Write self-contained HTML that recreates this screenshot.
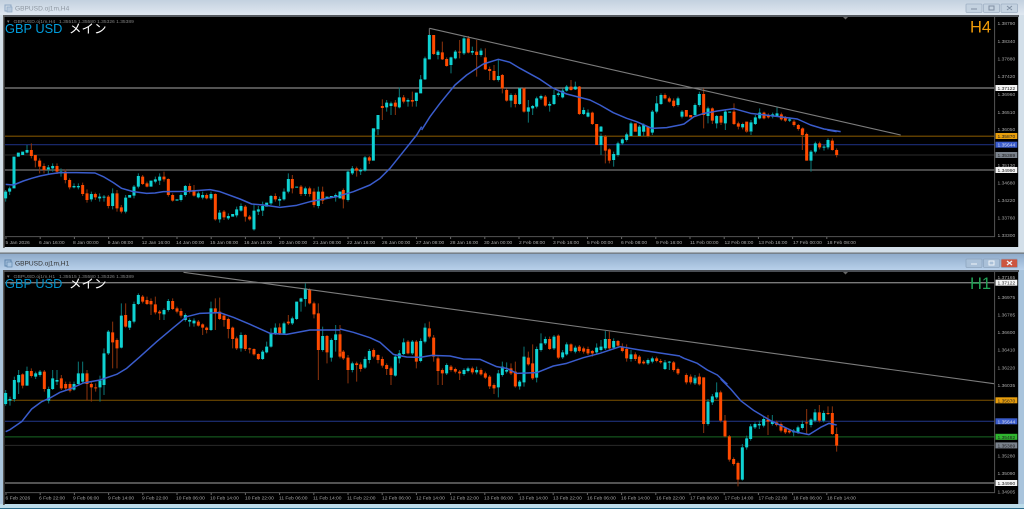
<!DOCTYPE html>
<html><head><meta charset="utf-8"><style>
html,body{margin:0;padding:0;background:#000;width:1024px;height:509px;overflow:hidden}
svg{display:block;filter:blur(.32px)}
text{font-family:"Liberation Sans","Noto Sans CJK JP",sans-serif}
.u,.d,.uw,.dw{fill:none}
.u{stroke:#0fd2d2;stroke-width:9}
.d{stroke:#ff4a00;stroke-width:9}
.uw{stroke:#0b7878;stroke-width:3}
.dw{stroke:#8e340c;stroke-width:3}
.ma{fill:none;stroke:#3a5ccc;stroke-width:4.5;stroke-linejoin:round}
.t{font-size:4.9px;fill:#a8a8a8}
.p{font-size:4.9px;fill:#a8a8a8}
.b{font-size:4.9px;fill:#222}
</style></head><body>
<svg width="1024" height="509" viewBox="0 0 1024 509" xmlns="http://www.w3.org/2000/svg">
<defs>
<linearGradient id="g1" x1="0" y1="0" x2="0" y2="1"><stop offset="0" stop-color="#c3d1df"/><stop offset="1" stop-color="#e0e8f1"/></linearGradient>
<linearGradient id="g2" x1="0" y1="0" x2="0" y2="1"><stop offset="0" stop-color="#8fabca"/><stop offset="1" stop-color="#b8d0ea"/></linearGradient>
</defs>
<rect width="1024" height="253" fill="#d3dfe9"/>
<rect width="1024" height="15" fill="url(#g1)"/>
<rect y="253" width="1024" height="256" fill="#a9c4dc"/>
<rect y="254" width="1024" height="16" fill="url(#g2)"/>
<rect y="252.6" width="1024" height="1" fill="#555"/>
<rect y="504" width="1024" height="4" fill="#bcdcea"/>
<rect y="508" width="1024" height="1" fill="#2a6a8a"/>
<rect x="3" y="15" width="1016" height="2" fill="#555a60"/>
<rect x="3" y="270" width="1016" height="2" fill="#4a4e54"/>
<rect x="3" y="15" width="1.8" height="233" fill="#666"/>
<rect x="3" y="270" width="1.8" height="235" fill="#555"/>
<rect x="4.5" y="17" width="1013.7" height="230" fill="#000"/>
<rect x="4.5" y="272" width="1013.7" height="232" fill="#000"/>

<!-- title bars -->
<rect x="5" y="5" width="6" height="6" fill="none" stroke="#8fa8c4" stroke-width="1"/><rect x="7" y="7" width="5" height="5" fill="#b6c8dc" stroke="#8fa8c4" stroke-width=".7"/>
<text x="15" y="10.6" font-size="6.6" fill="#8f98a2">GBPUSD.oj1m,H4</text>
<rect x="5" y="260" width="6" height="6" fill="none" stroke="#5f86ad" stroke-width="1"/><rect x="7" y="262" width="5" height="5" fill="#a8c4e0" stroke="#5f86ad" stroke-width=".7"/>
<text x="15" y="265.6" font-size="6.6" fill="#333">GBPUSD.oj1m,H1</text>
<g fill="#c4d2e0" stroke="#9fb0c4" stroke-width=".8">
<rect x="966" y="4" width="16" height="8.5" rx="1"/><rect x="983.5" y="4" width="16" height="8.5" rx="1"/><rect x="1001" y="4" width="16.5" height="8.5" rx="1"/>
</g>
<g fill="none" stroke="#7f8fa2" stroke-width="1"><path d="M971 9h6M989 6h5v4h-5zM1007 6l5 4M1012 6l-5 4"/></g>
<g stroke="#8ea5bf" stroke-width=".8"><rect x="966" y="259" width="16" height="8.5" rx="1" fill="#a9c0d8"/><rect x="983.5" y="259" width="16" height="8.5" rx="1" fill="#a9c0d8"/><rect x="1001" y="259" width="16.5" height="8.5" rx="1" fill="#cc5540"/></g>
<g fill="none" stroke="#eef3f8" stroke-width="1"><path d="M971 264h6M989 261h5v4h-5z"/><path d="M1007 261l5 4M1012 261l-5 4" stroke-width="1.3"/></g>

<!-- H4 lines -->
<g stroke-width="1.2">
<path d="M5 88H995" stroke="#858585"/>
<path d="M5 136.2H995" stroke="#7e5200"/>
<path d="M5 144.7H995" stroke="#1b2d78"/>
<path d="M5 155H995" stroke="#242424"/>
<path d="M5 170H995" stroke="#747474"/>
</g>
<!-- H1 lines -->
<path d="M5 282.7H995" stroke="#7a7a7a" stroke-width="1.3"/>
<path d="M5 400.3H995" stroke="#7e5200" stroke-width="1"/>
<path d="M5 421.3H995" stroke="#22388c" stroke-width="1"/>
<path d="M5 436.8H995" stroke="#0f4016" stroke-width="1.6"/>
<path d="M5 445.4H995" stroke="#2a2a2a" stroke-width="1"/>
<path d="M5 483H995" stroke="#6e6e6e" stroke-width="1.6"/>

<!-- axes -->
<path d="M5 236.6H994.6V17" fill="none" stroke="#555" stroke-width="1"/>
<path d="M5 492.6H994.6V272" fill="none" stroke="#555" stroke-width="1"/>
<path d="M5.5 238H830" stroke="#666" stroke-width="2" stroke-dasharray="1 33.2"/>
<path d="M5.5 494H830" stroke="#666" stroke-width="2" stroke-dasharray="1 33.2"/>
<path d="M843 17h5l-2.5 2.5z" fill="#666"/>
<path d="M843 272h5l-2.5 2.5z" fill="#666"/>

<!-- H4 candles -->
<g transform="translate(0,130) scale(.33333)">
<path class="uw" d="M17 180V215M29 170V195M81 45V70M145 105V135M158 100V125M183 115V140M222 160V175M235 160V178M274 185V215M299 190V215M312 195V215M338 175V238M377 195V250M402 165V205M415 130V175M466 140V160M479 130V165M543 190V215M556 165V200M595 185V205M608 185V208M633 185V210M659 240V278M685 250V270M710 230V262M723 220V245M762 225V302M775 228V255M788 215V258M813 195V225M839 200V228M852 175V212M865 130V190M916 170V198M955 170V235M1007 190V215"/>
<path class="dw" d="M94 40V85M106 75V112M119 85V130M132 100V130M171 100V132M196 118V160M209 145V178M248 158V198M261 178V218M286 188V210M325 195V235M351 180V245M364 225V250M428 135V165M441 155V172M492 125V155M505 145V200M518 190V215M569 160V190M582 165V200M620 190V208M646 190V272M672 240V270M736 225V275M749 255V272M826 190V215M877 135V190M903 165V198M929 170V200M942 175V232M968 170V222"/>
<path class="u" d="M17 185V205M29 175V185M42 80V175M55 68V80M68 65V75M81 60V68M145 112V118M158 108V115M183 125V130M222 168V172M235 168V172M274 192V208M299 200V205M312 200V203M338 190V228M377 203V245M389 195V203M402 170V197M415 138V170M453 152V170M466 148V155M479 140V152M531 208V212M543 195V210M556 168V195M595 190V202M608 195V203M633 192V205M659 248V268M685 258V265M698 252V260M710 238V256M723 228V242M762 242V298M775 238V245M788 228V242M800 218V230M813 198V220M839 207V212M852 185V208M865 147V185M890 170V173M916 175V192M955 185V228M981 200V205M994 198V203M1007 195V200M1020 185V200"/>
<path class="d" d="M94 60V78M106 75V92M119 92V110M132 108V120M171 108V125M196 125V150M209 150V172M248 165V192M261 190V210M286 192V202M325 200V228M351 190V235M364 232V245M428 140V162M441 160V170M492 140V148M505 147V195M518 195V212M569 168V182M582 180V197M620 195V205M646 192V268M672 245V262M736 230V260M749 260V268M826 198V208M877 147V175M903 170V192M929 175V192M942 185V225M968 185V212"/>
<polyline class="ma" points="17,163 40,165 70,153 95,145 120,138 150,132 180,128 230,128 285,129 310,140 340,158 365,175 400,185 440,190 465,189 490,185 560,184 630,179 660,185 720,207 755,222 790,225 840,232 890,226 930,215 1020,198"/>
</g>
<g transform="translate(340,130) scale(.33333)">
<path class="uw" d="M24 120V215M37 108V135M62 115V135M75 78V125M114 0V15M783 10V75M821 65V110M834 35V80M847 25V45M860 8V35M911 0V18M937 0V15"/>
<path class="dw" d="M10 175V235M50 110V140M88 78V102M796 15V100M808 55V100M924 0V22"/>
<path class="u" d="M0 185V205M24 125V210M37 115V130M62 120V124M75 82V122M100 -5V92M783 18V45M821 72V90M834 40V75M847 28V40M860 13V30M873 0V18M898 0V18M911 0V5M937 0V8"/>
<path class="d" d="M10 180V208M50 115V122M88 82V92M770 -5V45M796 20V62M808 58V92M886 0V5M924 0V18"/>
<polyline class="ma" points="0,197 40,185 90,165 120,145 150,115 190,65 230,15 245,-10"/>
</g>
<g transform="translate(340,0) scale(.33333)">
<path d="M268 85V105" stroke="#777" stroke-width="3"/>
<path class="uw" d="M140 300V335M153 305V345M178 262V325M204 295V320M229 278V320M242 225V240M255 170V240M294 150V178M333 170V220M346 150V178M372 110V165M397 140V165M423 145V170M475 180V245M513 280V322M539 262V315M565 300V368M578 315V345M590 290V325M603 284V300M629 305V335M642 270V315M655 275V290M668 265V295M680 255V275M706 245V270M731 322V345M744 328V352M873 365V390M898 375V390M911 370V390M937 330V390M950 288V340M963 280V315M1014 290V320M783 378V390"/>
<path class="dw" d="M127 298V360M166 300V345M191 285V310M217 275V320M281 105V165M307 125V180M320 172V200M359 120V175M385 108V160M410 120V230M436 145V210M449 200V240M462 195V243M487 222V280M500 265V305M526 280V322M552 262V338M616 285V320M693 240V272M718 258V345M757 335V375M975 280V298M988 290V308M1001 295V322"/>
<path class="u" d="M101 385V395M114 345V388M140 308V322M153 310V318M178 292V322M204 300V305M229 278V303M242 238V280M255 175V238M268 105V178M294 155V165M333 172V195M346 155V175M372 115V160M397 153V158M423 152V165M475 228V240M513 285V302M539 265V312M565 322V335M578 318V325M590 295V320M603 288V295M629 312V317M642 285V312M655 280V285M668 272V292M680 260V272M706 260V268M731 330V342M744 338V350M873 370V395M898 380V395M911 375V395M937 335V395M950 310V335M963 285V312M1014 295V315M783 380V395"/>
<path class="d" d="M127 318V324M166 308V320M191 292V305M217 300V305M281 105V162M307 157V178M320 177V198M359 155V158M385 115V158M410 155V165M436 172V208M449 207V213M462 213V240M487 225V265M500 270V302M526 285V312M552 265V335M616 290V317M693 260V270M718 260V342M757 338V372M770 372V395M886 370V395M924 380V395M975 285V295M988 295V305M1001 302V318"/>
<polyline class="ma" points="245,390 270,350 300,310 345,255 380,225 430,192 475,178 510,187 540,205 600,238 640,265 680,282 750,300 780,315 820,338 860,355 890,365 935,385 980,383 1020,375"/>
</g>
<g transform="translate(684,0) scale(.33333)">
<path class="uw" d="M-6 330V355M33 310V350M46 275V320M72 320V370M98 345V385M124 330V390M201 360V395M214 345V375M227 325V358M266 338V355M279 322V350M317 352V366"/>
<path class="dw" d="M59 265V385M85 322V372M111 345V375M150 310V375M163 365V388M176 368V388M240 335V358M253 340V356M292 338V362M304 348V366M330 360V380M343 372V392M356 382V398"/>
<path class="u" d="M-6 335V350M33 315V345M46 282V315M72 325V348M98 348V370M124 335V370M137 335V338M176 372V382M201 367V395M214 352V372M227 338V355M266 343V350M279 340V348M317 358V362"/>
<path class="d" d="M7 330V350M20 345V352M59 282V345M85 325V362M111 348V368M150 335V372M163 370V380M188 365V395M240 338V355M253 345V352M292 343V358M304 352V362M330 365V375M343 375V387M356 385V395"/>
<polyline class="ma" points="-12,375 0,372 30,350 60,340 100,333 150,326 200,340 260,347 340,357 380,375 420,387 470,395"/>
</g>
<g transform="translate(684,130) scale(.33333)">
<path class="uw" d="M201 0V15M381 60V125M394 35V70M420 45V62M432 25V58"/>
<path class="dw" d="M188 0V8M355 0V60M368 8V92M407 35V58M445 25V62M458 55V82"/>
<path class="u" d="M201 -3V3M381 65V92M394 40V65M420 50V53M432 30V52"/>
<path class="d" d="M355 -3V15M368 12V92M407 40V52M445 32V60M458 60V75"/>
<polyline class="ma" points="430,0 458,5"/>
</g>

<!-- H1 candles -->
<g transform="translate(0,255) scale(.33333)">
<path class="uw" d="M17 405V452M30 425V452M43 365V440M56 345V417M81 335V392M107 350V372M120 345V365M146 395V445M158 345V405M171 345V390M222 380V407M235 320V392M248 320V385M300 362V440M312 280V420M325 225V300M364 145V280M389 195V225M402 140V205M415 115V150M492 160V195M505 132V170M556 175V200M569 190V215M582 190V215M633 140V228M723 232V290M788 285V315M800 260V295M813 220V278M826 205V240M852 200V240M877 185V210M890 140V195M903 128V170M916 85V155M968 215V290M994 250V320M1007 210V290"/>
<path class="dw" d="M68 355V400M94 340V368M133 345V410M184 360V405M197 380V405M210 380V412M261 345V437M274 380V440M287 385V410M338 200V340M351 250V340M377 145V218M428 120V145M441 125V150M453 130V180M466 125V178M479 165V195M518 130V165M531 155V175M543 160V188M595 195V215M608 205V240M620 215V235M646 130V225M659 128V195M672 175V215M685 188V250M698 215V280M710 245V285M736 238V288M749 278V295M762 280V302M775 295V315M839 205V240M865 180V210M929 100V148M942 140V190M955 145V375M981 240V325M1020 210V310"/>
<path class="u" d="M17 414V447M30 432V437M43 375V432M56 360V382M81 348V392M107 355V365M120 350V360M146 402V437M158 370V402M171 375V380M222 387V404M235 355V387M248 355V380M300 377V397M312 295V390M325 230V295M364 182V278M389 198V218M402 147V200M415 120V147M492 165V178M505 138V165M556 180V195M569 195V200M582 197V205M633 160V225M723 240V280M788 290V312M800 275V292M813 235V275M826 218V235M852 205V235M877 190V205M890 140V192M903 130V140M916 100V132M968 243V285M994 255V308M1007 238V255"/>
<path class="d" d="M68 358V392M94 348V363M133 350V402M184 370V400M197 387V400M210 387V407M261 355V387M274 387V397M287 397V400M338 232V262M351 255V280M377 180V215M428 125V140M441 135V147M453 138V148M466 148V172M479 170V175M518 138V162M531 160V170M543 168V182M595 200V212M608 208V218M620 218V225M646 160V172M659 170V192M672 182V195M685 192V222M698 218V252M710 250V280M736 240V282M749 280V283M762 282V298M775 297V312M839 217V235M865 200V205M929 105V145M942 145V178M955 175V285M981 243V292M1020 238V305"/>
<polyline class="ma" points="17,530 30,524 65,500 95,462 125,440 150,429 180,412 210,402 250,384 300,375 350,358 380,340 420,305 470,260 520,218 560,185 600,175 660,173 700,187 750,208 810,235 860,238 930,225 1020,225"/>
</g>
<g transform="translate(340,255) scale(.33333)">
<path class="uw" d="M37 320V352M75 305V342M88 282V325M166 300V365M178 285V325M191 250V300M217 255V300M242 250V322M255 205V265M320 325V360M372 340V362M384 335V352M410 335V358M475 345V427M487 320V365M500 322V355M539 375V404M552 275V395M590 275V382M603 235V290M616 245V270M642 240V285M668 285V312M680 262V302M706 272V295M770 265V298M783 255V290M796 228V285M821 250V282M873 285V320M924 310V330M937 305V325M975 315V345M988 318V345"/>
<path class="dw" d="M0 232V295M10 285V315M24 300V385M50 320V380M62 322V350M101 280V310M114 298V325M127 305V338M140 325V360M153 335V390M204 255V298M229 255V340M268 200V250M281 240V320M294 305V390M307 340V390M333 330V350M346 338V355M359 345V375M397 335V358M423 340V362M436 350V372M449 360V402M462 385V417M513 325V360M526 320V398M565 290V332M578 268V375M629 245V285M655 238V312M693 265V292M718 270V292M731 275V296M744 275V300M757 285V305M808 230V285M834 255V278M847 265V292M860 268V320M886 292V318M898 300V328M911 315V328M950 305V322M962 312V326M1001 318V350M1014 338V360"/>
<path class="u" d="M37 325V345M75 312V338M88 288V315M166 305V362M178 295V310M191 262V297M217 260V295M242 258V318M255 218V260M320 330V355M372 345V357M384 340V348M410 345V352M475 355V397M487 335V360M500 345V350M539 380V394M552 305V382M590 282V368M603 265V285M616 252V265M642 245V280M668 292V307M680 268V298M706 278V290M770 278V292M783 275V285M796 252V280M821 258V278M873 298V312M924 315V325M937 310V320M975 322V342M988 320V323"/>
<path class="d" d="M0 238V290M10 290V310M24 308V345M50 325V330M62 328V342M101 285V305M114 300V315M127 312V332M140 330V342M153 340V360M204 260V295M229 260V320M268 220V245M281 248V305M294 310V348M307 345V355M333 335V345M346 342V350M359 350V355M397 340V352M423 345V358M436 355V368M449 365V394M462 390V400M513 340V355M526 350V394M565 308V328M578 325V370M629 252V282M655 242V308M693 268V288M718 275V288M731 280V290M744 282V295M757 288V295M808 252V280M834 258V272M847 275V288M860 282V310M886 298V312M898 305V325M911 320V325M950 310V318M962 318V322M1001 322V345M1014 342V355"/>
<polyline class="ma" points="0,222 40,232 90,248 120,262 160,298 200,306 240,307 275,301 330,303 370,312 420,313 470,335 500,340 530,355 590,353 640,333 680,325 730,308 780,295 840,275 900,285 1020,303"/>
</g>
<g transform="translate(684,255) scale(.33333)">
<path class="uw" d="M33 360V390"/>
<path class="dw" d="M7 355V388M20 358V388M46 355V392"/>
<path class="u" d="M33 368V385"/>
<path class="d" d="M7 360V382M20 365V382M46 365V388"/>
<polyline class="ma" points="-12,304 0,310 40,325 70,345 100,360 130,388"/>
</g>
<g transform="translate(684,379) scale(.33333)">
<path class="uw" d="M33 -8V10M72 60V140M85 45V78M98 10V60M175 195V305M188 170V212M200 135V185M213 130V150M226 125V150M239 112V145M265 108V140M329 150V172M342 140V165M355 125V152M381 118V145M393 90V130M419 95V130"/>
<path class="dw" d="M59 -5V162M110 35V130M123 108V175M136 168V248M149 235V260M162 248V322M252 108V168M278 125V142M291 130V160M304 145V165M316 150V164M368 90V165M406 78V130M432 82V108M445 82V168M458 145V218"/>
<path class="u" d="M33 0V8M72 68V135M85 52V70M98 40V55M175 205V302M188 178V205M200 142V180M213 135V145M226 135V139M239 120V140M265 128V135M329 155V160M342 145V160M355 135V147M381 122V138M393 100V125M419 102V125"/>
<path class="d" d="M59 -5V135M46 -5V2M110 40V125M123 125V172M136 172V242M149 240V255M162 252V302M252 122V128M278 130V138M291 135V155M304 148V160M316 155V160M368 130V133M406 100V125M432 102V105M445 102V165M458 165V200"/>
<polyline class="ma" points="110,0 140,30 170,65 210,95 260,125 330,158 375,167 410,145 435,133 458,138"/>
</g>

<!-- trendlines -->
<path d="M429.5 28.3L900.7 135" stroke="#7c7c7c" stroke-width="1.1" fill="none"/>
<path d="M183.5 272.3L994 383.7" stroke="#7c7c7c" stroke-width="1.1" fill="none"/>

<!-- header texts -->
<text x="7" y="22.8" font-size="4.9" fill="#808080">▾</text><text x="13.5" y="22.8" font-size="4.9" fill="#808080" textLength="41.7" lengthAdjust="spacingAndGlyphs">GBPUSD.oj1m,H4</text><text x="59" y="22.8" font-size="4.9" fill="#808080">1.35515 1.35580 1.35326 1.35389</text>
<text x="7" y="277.8" font-size="4.9" fill="#808080">▾</text><text x="13.5" y="277.8" font-size="4.9" fill="#808080" textLength="41.7" lengthAdjust="spacingAndGlyphs">GBPUSD.oj1m,H1</text><text x="59" y="277.8" font-size="4.9" fill="#808080">1.35515 1.35580 1.35326 1.35389</text>
<text x="5" y="33" font-size="12.8" fill="#009ddc">GBP USD</text>
<text x="69" y="33" font-size="12.5" fill="#fff">メイン</text>
<text x="5" y="288" font-size="12.8" fill="#0090c8">GBP USD</text>
<text x="69" y="288" font-size="12.5" fill="#fff">メイン</text>
<text x="970" y="32.3" font-size="16.5" fill="#f09c08">H4</text>
<text x="970" y="289" font-size="16.5" fill="#22a256">H1</text>

<!-- H4 price scale -->
<text class="p" x="997.5" y="25">1.38790</text><text class="p" x="997.5" y="43">1.38340</text><text class="p" x="997.5" y="60.5">1.37880</text><text class="p" x="997.5" y="78">1.37420</text><text class="p" x="997.5" y="96">1.36960</text><text class="p" x="997.5" y="114">1.36510</text><text class="p" x="997.5" y="131">1.36050</text><text class="p" x="997.5" y="167">1.35130</text><text class="p" x="997.5" y="184.5">1.34680</text><text class="p" x="997.5" y="202">1.34220</text><text class="p" x="997.5" y="219.5">1.33760</text><text class="p" x="997.5" y="237">1.33300</text>
<rect x="995.5" y="85" width="21.8" height="6" fill="#f4f4f4"/><text class="b" x="997.5" y="90">1.37122</text>
<rect x="995.5" y="133" width="21.8" height="6" fill="#e89e0c"/><text class="b" x="997.5" y="138">1.35870</text>
<rect x="995.5" y="141.7" width="21.8" height="6" fill="#3a5ccc"/><text class="b" x="997.5" y="146.7" style="fill:#d8dcec">1.35644</text>
<rect x="995.5" y="152" width="21.8" height="6" fill="#7a828c"/><text class="b" x="997.5" y="157">1.35389</text>
<rect x="995.5" y="167" width="21.8" height="6" fill="#f4f4f4"/><text class="b" x="997.5" y="172">1.34990</text>

<!-- H1 price scale -->
<text class="p" x="997.5" y="279">1.37165</text><text class="p" x="997.5" y="299">1.36975</text><text class="p" x="997.5" y="316.5">1.36785</text><text class="p" x="997.5" y="334">1.36600</text><text class="p" x="997.5" y="351.5">1.36410</text><text class="p" x="997.5" y="369.5">1.36220</text><text class="p" x="997.5" y="387">1.36035</text><text class="p" x="997.5" y="457.5">1.35280</text><text class="p" x="997.5" y="475">1.35090</text><text class="p" x="997.5" y="493.5">1.34905</text>
<rect x="995.5" y="279.7" width="21.8" height="6" fill="#f4f4f4"/><text class="b" x="997.5" y="284.7">1.37122</text>
<rect x="995.5" y="397.3" width="21.8" height="6" fill="#e89e0c"/><text class="b" x="997.5" y="402.3">1.35870</text>
<rect x="995.5" y="418.3" width="21.8" height="6" fill="#3a5ccc"/><text class="b" x="997.5" y="423.3" style="fill:#d8dcec">1.35644</text>
<rect x="995.5" y="433.8" width="21.8" height="6" fill="#2fb52f"/><text class="b" x="997.5" y="438.8">1.35482</text>
<rect x="995.5" y="442.4" width="21.8" height="6" fill="#7a828c"/><text class="b" x="997.5" y="447.4">1.35389</text>
<rect x="995.5" y="480" width="21.8" height="6" fill="#f4f4f4"/><text class="b" x="997.5" y="485">1.34990</text>

<!-- H4 dates -->
<text class="t" x="5.5" y="244">5 Jan 2026</text><text class="t" x="39" y="244">6 Jan 16:00</text><text class="t" x="73" y="244">8 Jan 00:00</text><text class="t" x="107.7" y="244">9 Jan 08:00</text><text class="t" x="141.7" y="244">12 Jan 16:00</text><text class="t" x="176" y="244">14 Jan 00:00</text><text class="t" x="210" y="244">15 Jan 08:00</text><text class="t" x="244" y="244">16 Jan 16:00</text><text class="t" x="279" y="244">20 Jan 00:00</text><text class="t" x="313" y="244">21 Jan 08:00</text><text class="t" x="347" y="244">22 Jan 16:00</text><text class="t" x="382" y="244">26 Jan 00:00</text><text class="t" x="416" y="244">27 Jan 08:00</text><text class="t" x="450" y="244">28 Jan 16:00</text><text class="t" x="484" y="244">30 Jan 00:00</text><text class="t" x="519" y="244">2 Feb 08:00</text><text class="t" x="553" y="244">3 Feb 16:00</text><text class="t" x="587" y="244">5 Feb 00:00</text><text class="t" x="621" y="244">6 Feb 08:00</text><text class="t" x="656" y="244">9 Feb 16:00</text><text class="t" x="690" y="244">11 Feb 00:00</text><text class="t" x="724.5" y="244">12 Feb 08:00</text><text class="t" x="758.5" y="244">13 Feb 16:00</text><text class="t" x="793" y="244">17 Feb 00:00</text><text class="t" x="827" y="244">18 Feb 08:00</text>
<!-- H1 dates -->
<text class="t" x="5.5" y="499.5">6 Feb 2026</text><text class="t" x="39" y="499.5">6 Feb 22:00</text><text class="t" x="73" y="499.5">9 Feb 06:00</text><text class="t" x="108" y="499.5">9 Feb 14:00</text><text class="t" x="142" y="499.5">9 Feb 22:00</text><text class="t" x="176" y="499.5">10 Feb 06:00</text><text class="t" x="210" y="499.5">10 Feb 14:00</text><text class="t" x="245" y="499.5">10 Feb 22:00</text><text class="t" x="279" y="499.5">11 Feb 06:00</text><text class="t" x="313" y="499.5">11 Feb 14:00</text><text class="t" x="347" y="499.5">11 Feb 22:00</text><text class="t" x="382" y="499.5">12 Feb 06:00</text><text class="t" x="416" y="499.5">12 Feb 14:00</text><text class="t" x="450" y="499.5">12 Feb 22:00</text><text class="t" x="484" y="499.5">13 Feb 06:00</text><text class="t" x="519" y="499.5">13 Feb 14:00</text><text class="t" x="553" y="499.5">13 Feb 22:00</text><text class="t" x="587" y="499.5">16 Feb 06:00</text><text class="t" x="621" y="499.5">16 Feb 14:00</text><text class="t" x="656" y="499.5">16 Feb 22:00</text><text class="t" x="690" y="499.5">17 Feb 06:00</text><text class="t" x="724.5" y="499.5">17 Feb 14:00</text><text class="t" x="758.5" y="499.5">17 Feb 22:00</text><text class="t" x="793" y="499.5">18 Feb 06:00</text><text class="t" x="827" y="499.5">18 Feb 14:00</text>
</svg>
</body></html>
